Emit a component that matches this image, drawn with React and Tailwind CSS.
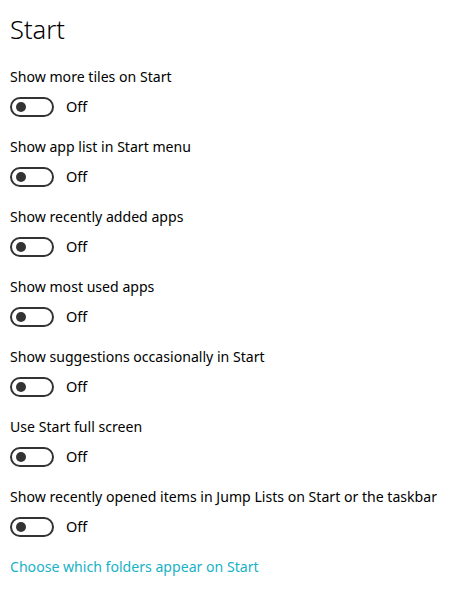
const SETTINGS = [
  "Show more tiles on Start",
  "Show app list in Start menu",
  "Show recently added apps",
  "Show most used apps",
  "Show suggestions occasionally in Start",
  "Use Start full screen",
  "Show recently opened items in Jump Lists on Start or the taskbar",
];

function Toggle() {
  return (
    <div className="flex items-center h-5">
      <div className="w-[44px] h-5 rounded-full border-2 border-[#333333] flex items-center pl-[4px]">
        <div className="w-[10px] h-[10px] rounded-full bg-[#333333]" />
      </div>
      <span className="ml-[12px] text-[14.5px] text-black">Off</span>
    </div>
  );
}

export default function App() {
  return (
    <div
      className="w-[469px] h-[593px] bg-white pl-[10px] overflow-hidden"
      style={{ fontFamily: '"Noto Sans", "Open Sans", sans-serif' }}
    >
      <h1 className="pt-[10px] h-[67px] text-[25.5px] font-light text-black leading-[38px]">
        Start
      </h1>
      <div className="flex flex-col gap-5">
        {SETTINGS.map((label) => (
          <div key={label} className="flex flex-col gap-[10px]">
            <div className="h-5 leading-5 text-[14.1px] text-black">{label}</div>
            <Toggle />
          </div>
        ))}
        <div className="h-5 leading-5 text-[14.1px] text-[#16b2c6]">
          Choose which folders appear on Start
        </div>
      </div>
    </div>
  );
}
